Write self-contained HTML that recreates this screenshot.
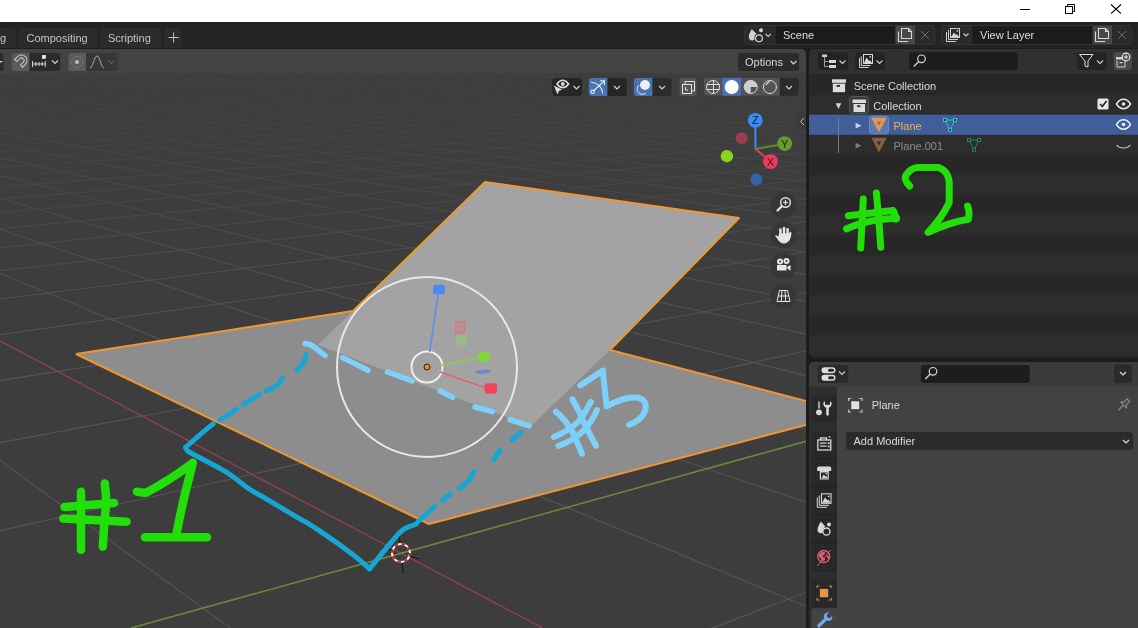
<!DOCTYPE html>
<html><head><meta charset="utf-8">
<style>
*{margin:0;padding:0;box-sizing:border-box}
html,body{width:1138px;height:628px;overflow:hidden;background:#1c1c1c;font-family:"Liberation Sans",sans-serif}
.a{position:absolute}
svg{display:block;will-change:transform}
#title{left:0;top:0;width:1138px;height:22px;background:#fff}
#topbar{left:0;top:22px;width:1138px;height:26px;background:#232323}
.tab{top:28px;height:20px;background:#2a2a2a;border-radius:4px 4px 0 0;color:#c2c2c2;font-size:12px;line-height:20px;text-align:center}
#vp{left:0;top:49px;width:806px;height:579px;background:#3d3d3d;overflow:hidden;border-radius:0 5px 0 0}
#outl{left:809px;top:49px;width:329px;height:308.6px;background:#272727;border-radius:5px 0 0 5px;overflow:hidden}
#props{left:809px;top:362px;width:329px;height:266px;background:#424242;border-radius:5px 0 0 0;overflow:hidden}
.txt{color:#d2d2d2;font-size:12px;white-space:nowrap;line-height:14px}
</style></head><body>
<div id="title" class="a">
  <svg class="a" style="left:0;top:0" width="1138" height="22">
    <line x1="1020" y1="9.5" x2="1030" y2="9.5" stroke="#000" stroke-width="1"/>
    <rect x="1065.5" y="6.5" width="7" height="7" fill="none" stroke="#000" stroke-width="1"/>
    <path d="M1067.5 6.5 V4.5 H1074.5 V11.5 H1072.5" fill="none" stroke="#000" stroke-width="1"/>
    <path d="M1111 4.5 L1121 13.7 M1121 4.5 L1111 13.7" stroke="#000" stroke-width="1.1"/>
  </svg>
</div>
<div id="topbar" class="a">
  <!-- scene selector -->
  <svg class="a" style="left:0;top:0" width="1138" height="26">
    <g>
      <rect x="744.5" y="3.5" width="190.5" height="19" rx="3" fill="#2a2a2a" stroke="#333" stroke-width="1"/>
      <rect x="776" y="4" width="119.5" height="18" fill="#1b1b1b"/>
      <rect x="895.5" y="4" width="19.5" height="18" fill="#484848"/>
      <!-- scene icon -->
      <path d="M751.8 7 C750.5 9.5 748.8 12 748.8 14.8 C748.8 17 750.2 18.5 752 18.5 C753 18.5 754 18 754.6 17.2 C754 14 755.5 12 756.5 11.8 C755.2 10.2 753 8.8 751.8 7Z" fill="#d2d2d2"/>
      <circle cx="761" cy="8.2" r="2" fill="#d2d2d2"/>
      <circle cx="759" cy="16.2" r="3.4" fill="none" stroke="#d2d2d2" stroke-width="1.2"/>
      <path d="M765.5 11.8 L768.2 14.5 L770.9 11.8" fill="none" stroke="#d2d2d2" stroke-width="1.1"/>
      <!-- copy -->
      <path d="M898.5 9.5 V19.5 H908 M901.5 6.5 H908.5 L911.5 9.5 V16.5 H901.5 Z M908.5 6.5 V9.5 H911.5" fill="none" stroke="#d8d8d8" stroke-width="1.1"/>
      <path d="M921 9 L929 17 M929 9 L921 17" stroke="#6a6a6a" stroke-width="1"/>
      <text x="783" y="17.2" font-family="Liberation Sans" font-size="11" fill="#dcdcdc">Scene</text>
    </g>
    <g>
      <rect x="941.5" y="3.5" width="190.5" height="19" rx="3" fill="#2a2a2a" stroke="#333" stroke-width="1"/>
      <rect x="972.3" y="4" width="120.4" height="18" fill="#1b1b1b"/>
      <rect x="1092.7" y="4" width="19.3" height="18" fill="#484848"/>
      <!-- view layer icon -->
      <path d="M946.5 10 V19.5 H956 M948.5 8 V17.5 H958" fill="none" stroke="#cfcfcf" stroke-width="1"/>
      <rect x="950.5" y="6.5" width="9" height="9" fill="none" stroke="#cfcfcf" stroke-width="1"/>
      <path d="M951 15 L954 10.5 L956 13 L957 12 L959 15 Z" fill="#cfcfcf"/>
      <circle cx="957.3" cy="8.8" r="0.9" fill="#cfcfcf"/>
      <path d="M963.5 11.5 L966 14 L968.5 11.5" fill="none" stroke="#cfcfcf" stroke-width="1.1"/>
      <path d="M1095.5 9.5 V19.5 H1105 M1098.5 6.5 H1105.5 L1108.5 9.5 V16.5 H1098.5 Z M1105.5 6.5 V9.5 H1108.5" fill="none" stroke="#d8d8d8" stroke-width="1.1"/>
      <path d="M1118 9 L1126 17 M1126 9 L1118 17" stroke="#6a6a6a" stroke-width="1"/>
      <text x="980" y="17.2" font-family="Liberation Sans" font-size="11" fill="#dcdcdc">View Layer</text>
    </g>
  </svg>
</div>
<svg class="a" style="left:0;top:0" width="1138" height="48" viewBox="0 0 1138 48">
  <path d="M-30 48 V31 A3 3 0 0 1 -27 28 H13.3 A3 3 0 0 1 16.3 31 V48Z" fill="#2b2b2b"/>
  <path d="M18 48 V31 A3 3 0 0 1 21 28 H94.5 A3 3 0 0 1 97.5 31 V48Z" fill="#2b2b2b"/>
  <path d="M100.2 48 V31 A3 3 0 0 1 103.2 28 H158.3 A3 3 0 0 1 161.3 31 V48Z" fill="#2b2b2b"/>
  <path d="M164.3 48 V31 A3 3 0 0 1 167.3 28 H179 A3 3 0 0 1 182 31 V48Z" fill="#2b2b2b"/>
  <g font-family="Liberation Sans" font-size="11" fill="#c4c4c4">
    <text x="0" y="42">g</text>
    <text x="26.5" y="42">Compositing</text>
    <text x="108" y="42">Scripting</text>
  </g>
  <path d="M173.6 32.5 V42.5 M168.6 37.5 H178.6" stroke="#c4c4c4" stroke-width="1"/>
</svg>
<div id="vp" class="a">
<svg width="806" height="579" viewBox="0 49 806 579" style="position:absolute;left:0;top:0">
<defs>
  <linearGradient id="gfade" x1="0" y1="48" x2="0" y2="628" gradientUnits="userSpaceOnUse">
    <stop offset="0" stop-color="#fff" stop-opacity="0"/>
    <stop offset="0.07" stop-color="#fff" stop-opacity="0.12"/>
    <stop offset="0.2" stop-color="#fff" stop-opacity="0.4"/>
    <stop offset="0.4" stop-color="#fff" stop-opacity="0.8"/>
    <stop offset="0.6" stop-color="#fff" stop-opacity="1"/>
    <stop offset="1" stop-color="#fff" stop-opacity="1"/>
  </linearGradient>
  <mask id="gmask" maskUnits="userSpaceOnUse" x="0" y="48" width="806" height="580">
    <rect x="0" y="48" width="806" height="580" fill="url(#gfade)"/>
  </mask>
</defs>
<g stroke="#555555" stroke-width="1.1" mask="url(#gmask)">
<line x1="2372.0" y1="-158.0" x2="-3616.2" y2="217.5" stroke-opacity="1.00"/>
<line x1="2372.5" y1="-162.6" x2="-3615.2" y2="222.1" stroke-opacity="1.00"/>
<line x1="2373.0" y1="-167.4" x2="-3614.1" y2="226.9" stroke-opacity="1.00"/>
<line x1="2373.4" y1="-172.6" x2="-3612.9" y2="232.1" stroke-opacity="1.00"/>
<line x1="2373.8" y1="-178.0" x2="-3611.8" y2="237.5" stroke-opacity="1.00"/>
<line x1="2374.2" y1="-183.8" x2="-3610.6" y2="243.3" stroke-opacity="1.00"/>
<line x1="2374.5" y1="-190.0" x2="-3609.4" y2="249.5" stroke-opacity="1.00"/>
<line x1="2374.8" y1="-196.6" x2="-3608.1" y2="256.1" stroke-opacity="1.00"/>
<line x1="2375.0" y1="-203.7" x2="-3606.8" y2="263.1" stroke-opacity="1.00"/>
<line x1="2375.2" y1="-211.3" x2="-3605.4" y2="270.7" stroke-opacity="1.00"/>
<line x1="2375.3" y1="-219.4" x2="-3604.0" y2="278.8" stroke-opacity="1.00"/>
<line x1="2375.3" y1="-228.2" x2="-3602.4" y2="287.6" stroke-opacity="1.00"/>
<line x1="2375.3" y1="-237.7" x2="-3600.8" y2="297.1" stroke-opacity="1.00"/>
<line x1="2375.1" y1="-248.0" x2="-3599.1" y2="307.3" stroke-opacity="1.00"/>
<line x1="2374.8" y1="-259.2" x2="-3597.3" y2="318.5" stroke-opacity="1.00"/>
<line x1="2374.4" y1="-271.5" x2="-3595.3" y2="330.8" stroke-opacity="1.00"/>
<line x1="2373.8" y1="-284.9" x2="-3593.1" y2="344.2" stroke-opacity="1.00"/>
<line x1="2373.0" y1="-299.7" x2="-3590.8" y2="359.0" stroke-opacity="1.00"/>
<line x1="2371.9" y1="-316.1" x2="-3588.1" y2="375.4" stroke-opacity="1.00"/>
<line x1="2370.5" y1="-334.3" x2="-3585.2" y2="393.6" stroke-opacity="1.00"/>
<line x1="2368.7" y1="-354.8" x2="-3581.8" y2="414.0" stroke-opacity="1.00"/>
<line x1="2366.4" y1="-377.8" x2="-3578.0" y2="437.0" stroke-opacity="1.00"/>
<line x1="2363.5" y1="-404.0" x2="-3573.5" y2="463.2" stroke-opacity="1.00"/>
<line x1="2359.7" y1="-433.9" x2="-3568.2" y2="493.1" stroke-opacity="1.00"/>
<line x1="2354.9" y1="-468.6" x2="-3561.8" y2="527.7" stroke-opacity="1.00"/>
<line x1="2348.5" y1="-509.0" x2="-3554.0" y2="568.2" stroke-opacity="1.00"/>
<line x1="2340.2" y1="-557.0" x2="-3544.0" y2="616.2" stroke-opacity="1.00"/>
<line x1="2328.9" y1="-614.6" x2="-3531.2" y2="673.7" stroke-opacity="1.00"/>
<line x1="2313.3" y1="-685.0" x2="-3514.1" y2="744.1" stroke-opacity="1.00"/>
<line x1="2291.1" y1="-772.8" x2="-3490.3" y2="832.0" stroke-opacity="1.00"/>
<line x1="2258.3" y1="-885.1" x2="-3456.0" y2="944.3" stroke-opacity="1.00"/>
<line x1="2207.5" y1="-1032.9" x2="-3403.7" y2="1092.0" stroke-opacity="1.00"/>
<line x1="2123.7" y1="-1233.9" x2="-3318.3" y2="1293.0" stroke-opacity="1.00"/>
<line x1="1974.2" y1="-1516.8" x2="-3167.3" y2="1575.9" stroke-opacity="1.00"/>
<line x1="1682.4" y1="-1922.4" x2="-2874.0" y2="1981.4" stroke-opacity="1.00"/>
<line x1="1070.8" y1="-2465.5" x2="-2260.8" y2="2524.5" stroke-opacity="1.00"/>
<line x1="-109.2" y1="-2931.0" x2="-1079.3" y2="2990.0" stroke-opacity="1.00"/>
<line x1="-1570.1" y1="-2807.1" x2="383.1" y2="2866.1" stroke-opacity="1.00"/>
<line x1="-2544.6" y1="-2248.7" x2="1359.2" y2="2307.7" stroke-opacity="1.00"/>
<line x1="-3017.4" y1="-1736.1" x2="1833.5" y2="1795.0" stroke-opacity="1.00"/>
<line x1="-3363.2" y1="-1115.7" x2="2182.4" y2="1174.7" stroke-opacity="1.00"/>
<line x1="-3431.0" y1="-933.1" x2="2251.7" y2="992.0" stroke-opacity="1.00"/>
<line x1="-3472.7" y1="-797.5" x2="2294.9" y2="856.4" stroke-opacity="1.00"/>
<line x1="-3499.7" y1="-693.5" x2="2323.5" y2="752.4" stroke-opacity="1.00"/>
<line x1="-3518.1" y1="-611.5" x2="2343.4" y2="670.4" stroke-opacity="1.00"/>
<line x1="-3531.0" y1="-545.4" x2="2357.8" y2="604.3" stroke-opacity="1.00"/>
<line x1="-3540.3" y1="-491.0" x2="2368.7" y2="549.9" stroke-opacity="1.00"/>
<line x1="-3547.2" y1="-445.5" x2="2377.1" y2="504.4" stroke-opacity="0.97"/>
<line x1="-3552.4" y1="-407.0" x2="2383.8" y2="465.8" stroke-opacity="0.94"/>
<line x1="-3556.3" y1="-373.9" x2="2389.2" y2="432.7" stroke-opacity="0.90"/>
<line x1="-3559.3" y1="-345.2" x2="2393.7" y2="404.0" stroke-opacity="0.87"/>
<line x1="-3561.6" y1="-320.0" x2="2397.6" y2="378.8" stroke-opacity="0.84"/>
<line x1="-3563.4" y1="-297.9" x2="2400.8" y2="356.7" stroke-opacity="0.81"/>
<line x1="-3564.7" y1="-278.1" x2="2403.7" y2="336.9" stroke-opacity="0.78"/>
<line x1="-3565.7" y1="-260.5" x2="2406.2" y2="319.3" stroke-opacity="0.76"/>
<line x1="-3566.4" y1="-244.6" x2="2408.5" y2="303.4" stroke-opacity="0.74"/>
<line x1="-3567.0" y1="-230.3" x2="2410.5" y2="289.0" stroke-opacity="0.71"/>
<line x1="-3567.3" y1="-217.2" x2="2412.4" y2="276.0" stroke-opacity="0.69"/>
<line x1="-3567.5" y1="-205.3" x2="2414.1" y2="264.0" stroke-opacity="0.67"/>
<line x1="-3567.6" y1="-194.4" x2="2415.7" y2="253.1" stroke-opacity="0.66"/>
<line x1="-3567.6" y1="-184.4" x2="2417.2" y2="243.1" stroke-opacity="0.64"/>
<line x1="-3567.5" y1="-175.1" x2="2418.6" y2="233.8" stroke-opacity="0.62"/>
<line x1="-3567.3" y1="-166.6" x2="2419.9" y2="225.2" stroke-opacity="0.61"/>
<line x1="-3567.0" y1="-158.6" x2="2421.2" y2="217.3" stroke-opacity="0.59"/>
<line x1="-3566.7" y1="-151.2" x2="2422.4" y2="209.8" stroke-opacity="0.58"/>
<line x1="-3566.4" y1="-144.3" x2="2423.6" y2="202.9" stroke-opacity="0.56"/>
<line x1="-3566.0" y1="-137.8" x2="2424.7" y2="196.4" stroke-opacity="0.55"/>
<line x1="-3565.6" y1="-131.8" x2="2425.8" y2="190.4" stroke-opacity="0.54"/>
<line x1="-3565.1" y1="-126.1" x2="2426.8" y2="184.7" stroke-opacity="0.53"/>
<line x1="-3564.6" y1="-120.8" x2="2427.9" y2="179.3" stroke-opacity="0.51"/>
<line x1="-3564.1" y1="-115.7" x2="2428.9" y2="174.3" stroke-opacity="0.50"/>
<line x1="-3563.6" y1="-111.0" x2="2429.8" y2="169.5" stroke-opacity="0.49"/>
<line x1="-3563.1" y1="-106.5" x2="2430.8" y2="165.0" stroke-opacity="0.48"/>
<line x1="-3562.5" y1="-102.2" x2="2431.7" y2="160.7" stroke-opacity="0.47"/>
<line x1="-3561.9" y1="-98.2" x2="2432.7" y2="156.7" stroke-opacity="0.47"/>
<line x1="-3561.3" y1="-94.3" x2="2433.6" y2="152.8" stroke-opacity="0.46"/>
<line x1="-3560.7" y1="-90.7" x2="2434.5" y2="149.2" stroke-opacity="0.45"/>
<line x1="-3560.1" y1="-87.2" x2="2435.4" y2="145.7" stroke-opacity="0.44"/>
<line x1="-3559.5" y1="-83.9" x2="2436.2" y2="142.3" stroke-opacity="0.43"/>
<line x1="-3558.9" y1="-80.7" x2="2437.1" y2="139.2" stroke-opacity="0.42"/>
<line x1="-3558.2" y1="-77.7" x2="2438.0" y2="136.1" stroke-opacity="0.42"/>
<line x1="-3557.6" y1="-74.8" x2="2438.8" y2="133.2" stroke-opacity="0.41"/>
<line x1="-3556.9" y1="-72.1" x2="2439.7" y2="130.5" stroke-opacity="0.40"/>
<line x1="-3556.3" y1="-69.4" x2="2440.5" y2="127.8" stroke-opacity="0.40"/>
<line x1="-3555.6" y1="-66.9" x2="2441.3" y2="125.3" stroke-opacity="0.39"/>
<line x1="-3554.9" y1="-64.5" x2="2442.2" y2="122.8" stroke-opacity="0.38"/>
<line x1="-3554.2" y1="-62.1" x2="2443.0" y2="120.5" stroke-opacity="0.38"/>
<line x1="-3553.6" y1="-59.9" x2="2443.8" y2="118.2" stroke-opacity="0.37"/>
<line x1="-3552.9" y1="-57.7" x2="2444.6" y2="116.0" stroke-opacity="0.37"/>
<line x1="-3552.2" y1="-55.6" x2="2445.4" y2="113.9" stroke-opacity="0.36"/>
<line x1="-3551.5" y1="-53.6" x2="2446.2" y2="111.9" stroke-opacity="0.36"/>
<line x1="-3550.8" y1="-51.7" x2="2447.0" y2="110.0" stroke-opacity="0.35"/>
<line x1="-3550.1" y1="-49.8" x2="2447.8" y2="108.1" stroke-opacity="0.35"/>
<line x1="-3549.4" y1="-48.0" x2="2448.6" y2="106.3" stroke-opacity="0.34"/>
<line x1="-3548.7" y1="-46.3" x2="2449.4" y2="104.5" stroke-opacity="0.34"/>
<line x1="-3548.0" y1="-44.6" x2="2450.2" y2="102.8" stroke-opacity="0.33"/>
<line x1="-3547.3" y1="-43.0" x2="2450.9" y2="101.2" stroke-opacity="0.33"/>
<line x1="-3546.6" y1="-41.4" x2="2451.7" y2="99.6" stroke-opacity="0.32"/>
<line x1="-3545.9" y1="-39.9" x2="2452.5" y2="98.1" stroke-opacity="0.32"/>
<line x1="5213.6" y1="-55.9" x2="-785.2" y2="68.1" stroke-opacity="0.14"/>
<line x1="5215.3" y1="-56.3" x2="-783.4" y2="68.5" stroke-opacity="0.14"/>
<line x1="5217.0" y1="-56.8" x2="-781.7" y2="69.0" stroke-opacity="0.15"/>
<line x1="5218.7" y1="-57.3" x2="-780.0" y2="69.4" stroke-opacity="0.15"/>
<line x1="5220.4" y1="-57.8" x2="-778.3" y2="69.9" stroke-opacity="0.15"/>
<line x1="5222.1" y1="-58.3" x2="-776.5" y2="70.4" stroke-opacity="0.15"/>
<line x1="5223.8" y1="-58.8" x2="-774.8" y2="70.9" stroke-opacity="0.15"/>
<line x1="5225.5" y1="-59.3" x2="-773.1" y2="71.4" stroke-opacity="0.16"/>
<line x1="5227.2" y1="-59.9" x2="-771.3" y2="71.9" stroke-opacity="0.16"/>
<line x1="5228.9" y1="-60.4" x2="-769.6" y2="72.4" stroke-opacity="0.16"/>
<line x1="5230.6" y1="-61.0" x2="-767.9" y2="72.9" stroke-opacity="0.16"/>
<line x1="5232.4" y1="-61.6" x2="-766.1" y2="73.5" stroke-opacity="0.16"/>
<line x1="5234.1" y1="-62.2" x2="-764.4" y2="74.1" stroke-opacity="0.17"/>
<line x1="5235.8" y1="-62.8" x2="-762.6" y2="74.7" stroke-opacity="0.17"/>
<line x1="5237.5" y1="-63.4" x2="-760.9" y2="75.3" stroke-opacity="0.17"/>
<line x1="5239.3" y1="-64.1" x2="-759.1" y2="75.9" stroke-opacity="0.17"/>
<line x1="5241.0" y1="-64.7" x2="-757.4" y2="76.5" stroke-opacity="0.18"/>
<line x1="5242.7" y1="-65.4" x2="-755.6" y2="77.2" stroke-opacity="0.18"/>
<line x1="5244.4" y1="-66.1" x2="-753.8" y2="77.9" stroke-opacity="0.18"/>
<line x1="5246.2" y1="-66.9" x2="-752.1" y2="78.6" stroke-opacity="0.18"/>
<line x1="5247.9" y1="-67.6" x2="-750.3" y2="79.3" stroke-opacity="0.19"/>
<line x1="5249.6" y1="-68.4" x2="-748.5" y2="80.1" stroke-opacity="0.19"/>
<line x1="5251.4" y1="-69.2" x2="-746.8" y2="80.9" stroke-opacity="0.19"/>
<line x1="5253.1" y1="-70.1" x2="-745.0" y2="81.7" stroke-opacity="0.19"/>
<line x1="5254.8" y1="-70.9" x2="-743.2" y2="82.5" stroke-opacity="0.20"/>
<line x1="5256.6" y1="-71.8" x2="-741.4" y2="83.4" stroke-opacity="0.20"/>
<line x1="5258.3" y1="-72.7" x2="-739.6" y2="84.2" stroke-opacity="0.20"/>
<line x1="5260.1" y1="-73.7" x2="-737.8" y2="85.2" stroke-opacity="0.21"/>
<line x1="5261.8" y1="-74.6" x2="-736.1" y2="86.1" stroke-opacity="0.21"/>
<line x1="5263.5" y1="-75.7" x2="-734.3" y2="87.1" stroke-opacity="0.21"/>
<line x1="5265.3" y1="-76.7" x2="-732.5" y2="88.1" stroke-opacity="0.22"/>
<line x1="5267.0" y1="-77.8" x2="-730.7" y2="89.2" stroke-opacity="0.22"/>
<line x1="5268.8" y1="-79.0" x2="-728.8" y2="90.3" stroke-opacity="0.23"/>
<line x1="5270.5" y1="-80.1" x2="-727.0" y2="91.5" stroke-opacity="0.23"/>
<line x1="5272.3" y1="-81.4" x2="-725.2" y2="92.7" stroke-opacity="0.23"/>
<line x1="5274.0" y1="-82.6" x2="-723.4" y2="93.9" stroke-opacity="0.24"/>
<line x1="5275.7" y1="-84.0" x2="-721.6" y2="95.2" stroke-opacity="0.24"/>
<line x1="5277.5" y1="-85.4" x2="-719.7" y2="96.6" stroke-opacity="0.25"/>
<line x1="5279.2" y1="-86.8" x2="-717.9" y2="98.0" stroke-opacity="0.25"/>
<line x1="5281.0" y1="-88.3" x2="-716.1" y2="99.5" stroke-opacity="0.26"/>
<line x1="5282.7" y1="-89.9" x2="-714.2" y2="101.0" stroke-opacity="0.26"/>
<line x1="5284.5" y1="-91.5" x2="-712.4" y2="102.7" stroke-opacity="0.27"/>
<line x1="5286.2" y1="-93.3" x2="-710.5" y2="104.4" stroke-opacity="0.28"/>
<line x1="5288.0" y1="-95.1" x2="-708.7" y2="106.1" stroke-opacity="0.28"/>
<line x1="5289.7" y1="-97.0" x2="-706.8" y2="108.0" stroke-opacity="0.29"/>
<line x1="5291.4" y1="-99.0" x2="-704.9" y2="110.0" stroke-opacity="0.30"/>
<line x1="5293.2" y1="-101.1" x2="-703.1" y2="112.1" stroke-opacity="0.30"/>
<line x1="5294.9" y1="-103.3" x2="-701.2" y2="114.3" stroke-opacity="0.31"/>
<line x1="5296.6" y1="-105.7" x2="-699.3" y2="116.6" stroke-opacity="0.32"/>
<line x1="5298.3" y1="-108.1" x2="-697.4" y2="119.0" stroke-opacity="0.33"/>
<line x1="5300.1" y1="-110.8" x2="-695.4" y2="121.6" stroke-opacity="0.34"/>
<line x1="5301.8" y1="-113.6" x2="-693.5" y2="124.4" stroke-opacity="0.34"/>
<line x1="5303.5" y1="-116.5" x2="-691.6" y2="127.3" stroke-opacity="0.35"/>
<line x1="5305.2" y1="-119.7" x2="-689.6" y2="130.4" stroke-opacity="0.36"/>
<line x1="5306.8" y1="-123.0" x2="-687.7" y2="133.8" stroke-opacity="0.38"/>
<line x1="5308.5" y1="-126.6" x2="-685.7" y2="137.3" stroke-opacity="0.39"/>
<line x1="5310.2" y1="-130.5" x2="-683.7" y2="141.1" stroke-opacity="0.40"/>
<line x1="5311.8" y1="-134.6" x2="-681.7" y2="145.2" stroke-opacity="0.41"/>
<line x1="5313.4" y1="-139.0" x2="-679.6" y2="149.7" stroke-opacity="0.43"/>
<line x1="5315.0" y1="-143.8" x2="-677.5" y2="154.4" stroke-opacity="0.44"/>
<line x1="5316.6" y1="-149.1" x2="-675.4" y2="159.6" stroke-opacity="0.46"/>
<line x1="5318.2" y1="-154.7" x2="-673.3" y2="165.3" stroke-opacity="0.48"/>
<line x1="5319.7" y1="-160.9" x2="-671.1" y2="171.4" stroke-opacity="0.50"/>
<line x1="5321.1" y1="-167.7" x2="-668.9" y2="178.2" stroke-opacity="0.52"/>
<line x1="5322.5" y1="-175.1" x2="-666.6" y2="185.6" stroke-opacity="0.54"/>
<line x1="5323.9" y1="-183.4" x2="-664.2" y2="193.8" stroke-opacity="0.56"/>
<line x1="5325.2" y1="-192.5" x2="-661.8" y2="202.9" stroke-opacity="0.59"/>
<line x1="5326.3" y1="-202.8" x2="-659.3" y2="213.2" stroke-opacity="0.62"/>
<line x1="5327.3" y1="-214.3" x2="-656.6" y2="224.7" stroke-opacity="0.65"/>
<line x1="5328.2" y1="-227.4" x2="-653.7" y2="237.7" stroke-opacity="0.69"/>
<line x1="5328.9" y1="-242.4" x2="-650.7" y2="252.7" stroke-opacity="0.72"/>
<line x1="5329.3" y1="-259.7" x2="-647.3" y2="269.9" stroke-opacity="0.77"/>
<line x1="5329.3" y1="-279.9" x2="-643.6" y2="290.1" stroke-opacity="0.82"/>
<line x1="5328.8" y1="-303.8" x2="-639.3" y2="314.0" stroke-opacity="0.88"/>
<line x1="5327.5" y1="-332.5" x2="-634.4" y2="342.6" stroke-opacity="0.94"/>
<line x1="5325.2" y1="-367.6" x2="-628.3" y2="377.7" stroke-opacity="1.00"/>
<line x1="5321.3" y1="-411.5" x2="-620.6" y2="421.6" stroke-opacity="1.00"/>
<line x1="5314.7" y1="-468.0" x2="-610.3" y2="478.1" stroke-opacity="1.00"/>
<line x1="5303.6" y1="-543.2" x2="-595.4" y2="553.3" stroke-opacity="1.00"/>
<line x1="5284.0" y1="-648.2" x2="-572.0" y2="658.2" stroke-opacity="1.00"/>
<line x1="5165.9" y1="-1056.1" x2="-446.3" y2="1066.0" stroke-opacity="1.00"/>
<line x1="4948.8" y1="-1513.9" x2="-225.5" y2="1523.8" stroke-opacity="1.00"/>
<line x1="4158.3" y1="-2399.0" x2="568.8" y2="2408.9" stroke-opacity="1.00"/>
<line x1="1704.1" y1="-2921.3" x2="3026.8" y2="2931.1" stroke-opacity="1.00"/>
<line x1="51.1" y1="-1901.7" x2="4683.5" y2="1911.6" stroke-opacity="1.00"/>
</g>
  <line x1="0" y1="341" x2="542.5" y2="628" stroke="#8a4150" stroke-width="1.5"/>
  <line x1="131" y1="628" x2="806" y2="441.3" stroke="#6a8a36" stroke-width="1.6"/>
  <!-- planes -->
  <polygon points="76,354 353,311 610,350 806,401 806,425 429,524" fill="#8d8d8d"/>
  <polygon points="485,182 739,218 610,350 531,426 318,345 353,311" fill="#a3a3a3"/>
  <polyline points="76,354 353,311 485,182 739,218 610,350 806,401" fill="none" stroke="#f0962e" stroke-width="2" stroke-linejoin="round"/>
  <polyline points="806,425 429,524 76,354" fill="none" stroke="#f0962e" stroke-width="2" stroke-linejoin="round"/>
  <!-- 3d cursor -->
  <g transform="translate(401,553)">
    <circle r="9" fill="none" stroke="#fff" stroke-width="2"/>
    <circle r="9" fill="none" stroke="#c82020" stroke-width="2" stroke-dasharray="3.5 3.6"/>
    <path d="M-2 -20 L-1 -10 M1 10 L2 20 M-18 -6 L-9 -3 M9 3 L18 6" stroke="#111" stroke-width="1"/>
  </g>

  <!-- ===== viewport header ===== -->
  <rect x="0" y="49" width="806" height="24" fill="#434343"/>
  <!-- left partial button -->
  <rect x="-10" y="53" width="13.5" height="18" rx="3" fill="#2b2b2b"/>
  <path d="M-1 61 L1 63 L3 61" fill="#cfcfcf"/>
  <!-- snap -->
  <rect x="11.4" y="53" width="49" height="18" rx="3" fill="#2b2b2b"/>
  <path d="M14.4 53 H29.5 V71 H14.4 A3 3 0 0 1 11.4 68 V56 A3 3 0 0 1 14.4 53Z" fill="#5b5b5b"/>
  <g transform="translate(21.5 60.5) rotate(45)"><path d="M-5.5 4 V0 A5.5 5.5 0 0 1 5.5 0 V4 H2.5 V0 A2.5 2.5 0 0 0 -2.5 0 V4 Z" fill="none" stroke="#cacaca" stroke-width="1"/></g>
  <path d="M32.5 67 V61 M32.5 64 H45 M35.8 62 V66 M39 62 V66 M42.3 62 V66 M45.3 61 V67" stroke="#d4d4d4" stroke-width="1"/>
  <rect x="42" y="55" width="3.8" height="3.8" fill="#e4e4e4"/>
  <path d="M52 60.5 L55 63.5 L58 60.5" fill="none" stroke="#d0d0d0" stroke-width="1.2"/>
  <!-- proportional -->
  <rect x="68.3" y="53" width="49.4" height="18" rx="3" fill="#373737"/>
  <path d="M71.3 53 H86 V71 H71.3 A3 3 0 0 1 68.3 68 V56 A3 3 0 0 1 71.3 53Z" fill="#5b5b5b"/>
  <circle cx="77" cy="62" r="5.5" fill="none" stroke="#727272" stroke-width="1"/>
  <circle cx="77" cy="62" r="2" fill="#bdbdbd"/>
  <path d="M90 68 C93 68 94 56 97 56 C100 56 101 68 104 68" fill="none" stroke="#a8a8a8" stroke-width="1"/>
  <path d="M108.5 60.5 L111.5 63.5 L114.5 60.5" fill="none" stroke="#5a5a5a" stroke-width="1.2"/>
  <!-- options -->
  <rect x="738" y="53" width="61" height="18" rx="3" fill="#2b2b2b"/>
  <text x="745" y="66" font-family="Liberation Sans" font-size="11" fill="#d5d5d5">Options</text>
  <path d="M790.5 61 L793.5 64 L796.5 61" fill="none" stroke="#d6d6d6" stroke-width="1.2"/>
  <!-- eye -->
  <rect x="552.3" y="78" width="29.7" height="18" rx="3" fill="#262626"/>
  <path d="M557 84 C559 81.2 561 80.2 562.8 80.2 C564.6 80.2 566.6 81.2 568.6 84 C566.6 86.8 564.6 87.6 562.8 87.6 C561 87.6 559 86.8 557 84Z" fill="none" stroke="#dcdcdc" stroke-width="1.5"/>
  <circle cx="562.8" cy="83.9" r="1.9" fill="#dcdcdc"/>
  <path d="M553.8 85.6 L562.3 89.8 L559 90.8 L557.6 94.4Z" fill="#dcdcdc"/>
  <path d="M573.5 86 L576.5 89 L579.5 86" fill="none" stroke="#d6d6d6" stroke-width="1.2"/>
  <!-- gizmo toggle -->
  <rect x="588.7" y="78" width="38.1" height="18" rx="3" fill="#262626"/>
  <path d="M591.7 78 H607.4 V96 H591.7 A3 3 0 0 1 588.7 93 V81 A3 3 0 0 1 591.7 78Z" fill="#4772b3"/>
  <path d="M591.1 82.3 C597 82.5 602.5 87 602.7 93.6" fill="none" stroke="#eeeeee" stroke-width="1.1"/>
  <circle cx="592.6" cy="91.8" r="1.7" fill="none" stroke="#eeeeee" stroke-width="1.1"/>
  <path d="M593.9 90.5 L604.3 80.9 M600.2 80.8 H604.4 V85" fill="none" stroke="#eeeeee" stroke-width="1.1"/>
  <path d="M614 86 L617 89 L620 86" fill="none" stroke="#d6d6d6" stroke-width="1.2"/>
  <!-- overlays -->
  <rect x="633.7" y="78" width="37.8" height="18" rx="3" fill="#2b2b2b"/>
  <path d="M636.7 78 H652.4 V96 H636.7 A3 3 0 0 1 633.7 93 V81 A3 3 0 0 1 636.7 78Z" fill="#4772b3"/>
  <circle cx="645" cy="85" r="5" fill="#eeeeee"/>
  <path d="M639 85 A5.3 5.3 0 1 0 646 93" fill="none" stroke="#e8e8e8" stroke-width="1"/>
  <path d="M659 86 L662 89 L665 86" fill="none" stroke="#d0d0d0" stroke-width="1.2"/>
  <!-- xray -->
  <rect x="679.6" y="78" width="17" height="18" rx="3" fill="#545454"/>
  <rect x="682.5" y="84.5" width="9" height="9" fill="none" stroke="#e0e0e0" stroke-width="1"/>
  <path d="M685 84.5 V81.5 H694.5 V91 H691.5" fill="none" stroke="#e0e0e0" stroke-width="1"/>
  <path d="M685.5 87 V90 H688" fill="none" stroke="#e0e0e0" stroke-width="1"/>
  <!-- shading -->
  <rect x="703.9" y="77.8" width="94.7" height="18" rx="3" fill="#2b2b2b"/>
  <path d="M706.9 77.8 H722.2 V95.8 H706.9 A3 3 0 0 1 703.9 92.8 V80.8 A3 3 0 0 1 706.9 77.8Z" fill="#545454"/>
  <rect x="722.2" y="77.8" width="19" height="18" fill="#4772b3"/>
  <rect x="741.2" y="77.8" width="19" height="18" fill="#545454"/>
  <rect x="760.2" y="77.8" width="19.4" height="18" fill="#545454"/>
  <circle cx="713" cy="87" r="6.5" fill="none" stroke="#dcdcdc" stroke-width="1"/>
  <path d="M706.5 84.5 H719.5 M706.5 89.5 H719.5 M713.5 80.5 V93.5" stroke="#dcdcdc" stroke-width="1"/>
  <circle cx="731.7" cy="87" r="7" fill="#ffffff"/>
  <circle cx="750.7" cy="87" r="6.5" fill="none" stroke="#dcdcdc" stroke-width="1"/>
  <path d="M750.7 80.5 A6.5 6.5 0 0 0 750.7 93.5 V87 H757.2 A6.5 6.5 0 0 0 750.7 80.5Z" fill="#cfcfcf"/>
  <circle cx="769.9" cy="87" r="6.5" fill="none" stroke="#dcdcdc" stroke-width="1"/>
  <path d="M766 85 C767 83 768.5 82 770 81.5" fill="none" stroke="#dcdcdc" stroke-width="1.3"/>
  <path d="M786 86 L789 89 L792 86" fill="none" stroke="#d0d0d0" stroke-width="1.2"/>
  <!-- sidebar toggle -->
  <rect x="797" y="112" width="12" height="18" rx="3" fill="#3a3a3a"/>
  <path d="M804 118 L800.5 121.5 L804 125" fill="none" stroke="#bdbdbd" stroke-width="1"/>
  <!-- nav gizmo -->
  <line x1="755.6" y1="149" x2="755.3" y2="127" stroke="#3d8df0" stroke-width="2"/>
  <line x1="755.6" y1="149" x2="778" y2="145" stroke="#5f8a2a" stroke-width="2"/>
  <line x1="755.6" y1="149" x2="765" y2="157" stroke="#e04058" stroke-width="2"/>
  <circle cx="741.7" cy="138.2" r="6" fill="#9c3c4e"/>
  <circle cx="726.9" cy="156.2" r="6.2" fill="#86d41c"/>
  <circle cx="756.3" cy="179.4" r="6" fill="#3066a8"/>
  <circle cx="755.3" cy="120.3" r="7.4" fill="#3a8cf2"/>
  <circle cx="784.7" cy="143.6" r="7.4" fill="#6a9a2c"/>
  <circle cx="770.5" cy="161.6" r="7.4" fill="#ef3a5c"/>
  <text x="755.3" y="124.3" font-family="Liberation Sans" font-size="11" fill="#0c1a40" text-anchor="middle">Z</text>
  <text x="784.7" y="147.6" font-family="Liberation Sans" font-size="11" fill="#1a2a08" text-anchor="middle">Y</text>
  <text x="770.5" y="165.6" font-family="Liberation Sans" font-size="11" fill="#4a0a14" text-anchor="middle">X</text>
  <!-- nav buttons -->
  <g fill="#353535" fill-opacity="0.85">
    <circle cx="783.5" cy="205" r="13"/>
    <circle cx="783.5" cy="235" r="13"/>
    <circle cx="783.5" cy="265.5" r="13"/>
    <circle cx="783.5" cy="296" r="13"/>
  </g>
  <g fill="none" stroke="#e6e6e6">
    <circle cx="785.5" cy="202.5" r="4.8" stroke-width="1.4"/>
    <path d="M785.5 200 V205 M783 202.5 H788" stroke-width="1.2"/>
    <path d="M781.8 206.2 L777.5 210.5" stroke-width="2.2" stroke-linecap="round"/>
  </g>
  <g fill="#e6e6e6" stroke="#e6e6e6" stroke-linecap="round">
    <path d="M780.4 236 V229.5" stroke-width="2.5"/>
    <path d="M784 235 V228" stroke-width="2.5"/>
    <path d="M787.6 235 V229.3" stroke-width="2.5"/>
    <path d="M789.8 236.5 L790.4 233" stroke-width="2.2"/>
    <path d="M776 235.8 L779.2 237.3 L779.3 234 H790.6 L790 238 C789 241.5 786.5 243 783.8 243 C781 243 779.5 241.5 777.5 238.5 Z" stroke-width="1" stroke-linejoin="round"/>
  </g>
  <g fill="#e6e6e6">
    <circle cx="780" cy="261.5" r="3"/><circle cx="786.5" cy="261" r="3"/>
    <rect x="777" y="265" width="9.5" height="5.5"/>
    <path d="M786.5 267.5 L790.5 265 V271 Z"/>
  </g>
  <circle cx="780" cy="261.5" r="1" fill="#353535"/><circle cx="786.5" cy="261" r="1" fill="#353535"/>
  <g fill="none" stroke="#e6e6e6" stroke-width="1">
    <path d="M779.5 290.5 H787.5 L790 301.5 H777 Z"/>
    <path d="M778.3 296 H788.7 M782 290.5 L781.3 301.5 M785 290.5 L785.7 301.5"/>
  </g>

  <!-- transform gizmo -->
  <g>
    <circle cx="427" cy="367" r="90" fill="none" stroke="#e8e8e8" stroke-width="2"/>
    <circle cx="427" cy="367" r="15.5" fill="none" stroke="#eeeeee" stroke-width="2"/>
    <circle cx="427" cy="367" r="3" fill="#f08a20" stroke="#222" stroke-width="1"/>
    <line x1="429.7" y1="352" x2="438.5" y2="292" stroke="#5a8ff0" stroke-width="1.7"/>
    <rect x="433" y="284.8" width="11.8" height="9.5" rx="2.5" fill="#4b8af2"/>
    <line x1="440" y1="365.5" x2="480" y2="357.5" stroke="#8ad050" stroke-width="1.7"/>
    <rect x="477.8" y="352.2" width="12" height="9.6" rx="3" fill="#80d83c"/>
    <line x1="440" y1="372" x2="486" y2="388" stroke="#ee5c6e" stroke-width="1.7"/>
    <rect x="484.5" y="383.2" width="12.5" height="10.5" rx="3" fill="#f0445e"/>
    <path d="M456 322 L465.4 321 L464.4 332.5 L455 333.5 Z" fill="#e07080" fill-opacity="0.45" stroke="#e86878" stroke-opacity="0.8" stroke-width="1"/>
    <path d="M456 336 L466.3 334.5 L467.3 345.9 L457 346.9 Z" fill="#90d070" fill-opacity="0.55"/>
    <ellipse cx="483" cy="371.7" rx="8" ry="2" fill="#5b80e0" fill-opacity="0.8" transform="rotate(-4 483 371.7)"/>
  </g>

  <!-- ===== annotations ===== -->
  <g fill="none" stroke-linecap="round" stroke-linejoin="round">
    <!-- dark blue solid -->
    <path stroke="#16a6d3" stroke-width="5" d="M213.2 423.8 C210.9 425.7 203.8 431.4 199.2 435.3 C194.6 439.2 187.8 445.5 185.5 447.5 C186.1 448.2 185.7 449.7 189.0 451.9 C192.3 454.1 199.0 457.2 205.6 460.8 C212.2 464.4 221.3 468.8 228.5 473.5 C235.7 478.2 243.0 484.8 248.9 488.8 C254.8 492.8 257.0 493.4 264.2 497.7 C271.4 501.9 283.3 509.0 292.2 514.3 C301.1 519.6 307.5 522.8 317.7 529.6 C327.9 536.4 344.8 548.4 353.4 555.0 C362.0 561.6 366.9 566.7 369.6 569.0 C373.1 564.7 385.0 549.5 390.6 543.0 C396.2 536.5 398.7 532.9 403.0 529.7 C407.3 526.5 414.2 525.0 416.4 524.0"/>
    <!-- dark blue dashes left -->
    <g stroke="#16a6d3" stroke-width="5">
      <path d="M306 354.5 Q305 364 297 370"/>
      <path d="M282.5 378 Q280 386 265.8 391"/>
      <path d="M259 394.6 L243.5 404.6"/>
      <path d="M236.9 409 L220 420"/>
      <!-- right -->
      <path d="M521 432.3 L512 440"/>
      <path d="M500 450.5 L493.8 459.5"/>
      <path d="M474 471.7 Q470 482 459 488.3"/>
      <path d="M450 494 L442.4 500.4"/>
      <path d="M434.8 506.5 L418 521.6"/>
    </g>
    <!-- light blue dashes along fold -->
    <g stroke="#7dd0fa" stroke-width="5.5">
      <path d="M305 343.5 Q311 344 314 347 L325 355.6"/>
      <path d="M342.7 357.6 L368 370.3"/>
      <path d="M387.5 372 L412 381"/>
      <path d="M440 391 L452.6 397.4"/>
      <path d="M475 407 L492.4 411.7"/>
      <path d="M510 419.7 L529 426"/>
    </g>
    <!-- #3 -->
    <g stroke="#7dd0fa" stroke-width="6">
      <path d="M555.8 411.7 Q566 420 573 433 L582 453.7"/>
      <path d="M572.4 399.4 Q580 412 585 425 L596 445.8"/>
      <path d="M554 437 Q570 430 578 422 Q586 412 590.8 402"/>
      <path d="M558.5 446 Q575 440 584 430 Q593 420 597 410"/>
      <path d="M580.3 385.4 L603 370.5 Q604 385 606.6 406.4 Q625 396 638 397.7 Q648 400 645 411 Q642 420 629 424.8"/>
    </g>
    <!-- #1 green -->
    <g stroke="#22df0a" stroke-width="8.5">
      <path d="M81 491.7 V549.7"/>
      <path d="M104.8 483.5 Q106.5 496 105.9 506 Q104 525 102.8 546.6"/>
      <path d="M64.5 507 L114 503"/>
      <path d="M63.4 518.6 L126.6 521.7"/>
      <path d="M136.9 491.7 Q140 493 146 492.8 Q170 480 192.8 462.8 Q189 478 184.5 495.9 Q180 515 176.2 535.2"/>
      <path d="M145 537.2 H207"/>
    </g>
    <!-- #2 green (drawn here, but in outliner coordinates) -->
  </g>
</svg>
</div>
<div id="outl" class="a">
<svg width="329" height="309" viewBox="809 49 329 309" style="position:absolute;left:0;top:0">
  <rect x="809" y="49" width="329" height="25" fill="#303030"/>
  <g fill="#2d2d2d">
    <rect x="809" y="95" width="329" height="20"/>
    <rect x="809" y="135" width="329" height="20"/>
    <rect x="809" y="175" width="329" height="20"/>
    <rect x="809" y="215" width="329" height="20"/>
    <rect x="809" y="255" width="329" height="20"/>
    <rect x="809" y="295" width="329" height="20"/>
    <rect x="809" y="335" width="329" height="20"/>
  </g>
  <rect x="809" y="114.7" width="329" height="20.1" fill="#405e98"/>
  <!-- header buttons -->
  <rect x="817.9" y="52.3" width="30" height="17.7" rx="3" fill="#232323"/>
  <rect x="822" y="54.5" width="5" height="2.5" fill="#d0d0d0"/>
  <path d="M824.5 57 V66.5 H828.5 M824.5 61.5 H828.5" fill="none" stroke="#a0a0a0" stroke-width="1"/>
  <rect x="829" y="60" width="7" height="3" fill="#d6d6d6"/>
  <rect x="829" y="65" width="7" height="3" fill="#d6d6d6"/>
  <path d="M839.5 60.5 L842.5 63.5 L845.5 60.5" fill="none" stroke="#d0d0d0" stroke-width="1.1"/>
  <rect x="855.2" y="52.3" width="29.7" height="17.7" rx="3" fill="#232323"/>
  <path d="M859.5 58 V67.5 H868.5 M861.3 56.3 V65.5 H870.5" fill="none" stroke="#cfcfcf" stroke-width="1"/>
  <rect x="863.5" y="54.5" width="9" height="9" fill="none" stroke="#d8d8d8" stroke-width="1"/>
  <path d="M864 63 L866.5 57.5 L869 61 L870 60 L872 63 Z" fill="#d8d8d8"/>
  <circle cx="870.3" cy="56.8" r="0.9" fill="#d8d8d8"/>
  <path d="M876.5 60.5 L879.5 63.5 L882.5 60.5" fill="none" stroke="#d0d0d0" stroke-width="1.1"/>
  <rect x="909" y="52.3" width="109" height="17.7" rx="3" fill="#1d1d1d"/>
  <circle cx="921.5" cy="58.8" r="3.8" fill="none" stroke="#d8d8d8" stroke-width="1.2"/>
  <path d="M918.8 61.5 L913.8 66.5" stroke="#d8d8d8" stroke-width="1.2"/>
  <rect x="1076.8" y="52.3" width="29.8" height="17.7" rx="3" fill="#232323"/>
  <path d="M1079.5 54.5 H1093 L1088 61 V67 L1085 66 V61 Z" fill="none" stroke="#dadada" stroke-width="1" stroke-linejoin="round"/>
  <path d="M1097 60.5 L1100 63.5 L1103 60.5" fill="none" stroke="#d0d0d0" stroke-width="1.1"/>
  <rect x="1113.7" y="52.3" width="18.2" height="17.7" rx="3" fill="#4a4a4a"/>
  <rect x="1116" y="57" width="9" height="2.5" fill="#d0d0d0"/>
  <path d="M1117 60.5 V67 H1125 V60.5" fill="none" stroke="#d0d0d0" stroke-width="1"/>
  <rect x="1119.5" y="62" width="3" height="1.2" fill="#d0d0d0"/>
  <circle cx="1126" cy="57" r="3.8" fill="#4a4a4a" stroke="#e8e8e8" stroke-width="1.2"/>
  <path d="M1126 54.8 V59.2 M1123.8 57 H1128.2" stroke="#e8e8e8" stroke-width="1"/>
  <!-- row 1 scene collection -->
  <rect x="832" y="79.3" width="14" height="3.5" fill="#dcdcdc"/>
  <rect x="832.8" y="83.6" width="12.3" height="8.6" fill="#dcdcdc"/>
  <rect x="836.5" y="85" width="3.5" height="1.8" fill="#282828"/>
  <text x="853.7" y="90" font-family="Liberation Sans" font-size="11" fill="#dadada">Scene Collection</text>
  <!-- row 2 collection -->
  <path d="M835.6 103.2 H841.3 L838.45 108.9 Z" fill="#d0d0d0"/>
  <rect x="849.5" y="96.5" width="19" height="16.8" rx="3" fill="#3a3a3a" stroke="#5a5a5a" stroke-width="1"/>
  <rect x="852.5" y="99.5" width="13.5" height="3.5" fill="#dcdcdc"/>
  <rect x="853.5" y="104" width="11.5" height="8" fill="#dcdcdc"/>
  <rect x="857" y="105.3" width="3.5" height="1.8" fill="#3a3a3a"/>
  <text x="873.3" y="110" font-family="Liberation Sans" font-size="11" fill="#dadada">Collection</text>
  <rect x="1097.5" y="98.5" width="11" height="11" rx="1.5" fill="#e8e8e8"/>
  <path d="M1100 104 L1102.3 106.5 L1106.5 101" fill="none" stroke="#222" stroke-width="1.6"/>
  <path d="M1116.5 104 C1119 100 1121.5 99.3 1123.5 99.3 C1125.5 99.3 1128 100 1130.5 104 C1128 108 1125.5 108.7 1123.5 108.7 C1121.5 108.7 1119 108 1116.5 104Z" fill="none" stroke="#e8e8e8" stroke-width="1.5"/>
  <circle cx="1123.5" cy="104" r="1.8" fill="#e8e8e8"/>
  <!-- row 3 plane selected -->
  <line x1="838.5" y1="118" x2="838.5" y2="153" stroke="#7a7a7a" stroke-width="1"/>
  <path d="M855.6 122.8 V128.6 L861.5 125.7 Z" fill="#c8d4e8"/>
  <rect x="869.5" y="116.3" width="19" height="17.5" rx="3" fill="#5679b3" stroke="#6c8cc0" stroke-width="1"/>
  <path d="M871.8 118.1 H886.2 L878.9 131.9 Z M876.5 121.2 L881.6 121.2 L879 126.3 Z" fill="#eb9548" fill-rule="evenodd" stroke="#eb9548" stroke-width="0.6" stroke-linejoin="round"/>
  <text x="893.5" y="130" font-family="Liberation Sans" font-size="11" fill="#f2b052">Plane</text>
  <g stroke="#2cc4cc" stroke-width="1">
    <path d="M945 120 H955 L950 130 Z" fill="none"/>
    <rect x="943.5" y="118.5" width="3" height="3" fill="#0d3f4f"/>
    <rect x="953.5" y="118.5" width="3" height="3" fill="#0d3f4f"/>
    <rect x="948.5" y="128.3" width="3" height="3" fill="#0d3f4f"/>
  </g>
  <path d="M1116.5 124.5 C1119 120.5 1121.5 119.8 1123.5 119.8 C1125.5 119.8 1128 120.5 1130.5 124.5 C1128 128.5 1125.5 129.2 1123.5 129.2 C1121.5 129.2 1119 128.5 1116.5 124.5Z" fill="none" stroke="#e8ecf4" stroke-width="1.5"/>
  <circle cx="1123.5" cy="124.5" r="1.8" fill="#e8ecf4"/>
  <!-- row 4 plane.001 -->
  <path d="M855.6 142.8 V148.6 L861.5 145.7 Z" fill="#7a7a7a"/>
  <path d="M871.8 138.1 H886.2 L878.9 151.9 Z M876.5 141.2 L881.6 141.2 L879 146.3 Z" fill="#86603f" fill-rule="evenodd" stroke="#86603f" stroke-width="0.6" stroke-linejoin="round"/>
  <text x="893.5" y="150" font-family="Liberation Sans" font-size="11" fill="#8c8c8c">Plane.001</text>
  <g stroke="#1c8864" stroke-width="1">
    <path d="M969 140 H979 L974 150 Z" fill="none"/>
    <rect x="967.5" y="138.5" width="3" height="3" fill="#0b2a20"/>
    <rect x="977.5" y="138.5" width="3" height="3" fill="#0b2a20"/>
    <rect x="972.5" y="148.3" width="3" height="3" fill="#0b2a20"/>
  </g>
  <path d="M1116.5 145 C1120 149 1127 149 1130.5 145" fill="none" stroke="#c8c8c8" stroke-width="1.1"/>
  <g fill="none" stroke-linecap="round" stroke-linejoin="round" stroke="#22df0a" stroke-width="7">
    <path d="M863.3 199 Q862 225 860.7 248"/>
    <path d="M876.4 193 Q879 220 880.8 247.3"/>
    <path d="M848.4 215.7 L893 210.5 Q895 213 895.7 219.2"/>
    <path d="M846.6 228.9 Q860 222 882.6 219.2 L896.6 218.3"/>
    <path d="M909.7 186 Q904 180 905.4 176.3 Q910 168 917.6 167.5 L938.7 167.5 Q948 171 949.2 181.5 L949.2 202.6 Q942 218 928.1 232.4 Q950 222 968.4 219.2 Q970 212 967.6 206"/>
  </g>
</svg>
</div>
<div id="props" class="a">
<svg width="329" height="266" viewBox="809 362 329 266" style="position:absolute;left:0;top:0">
  <rect x="809" y="362" width="329" height="24.5" fill="#3b3b3b"/>
  <rect x="809" y="386.5" width="28" height="242" fill="#2e2e2e"/>
  <!-- header -->
  <rect x="817.6" y="364.9" width="30.6" height="18.1" rx="3" fill="#2a2a2a"/>
  <rect x="821.5" y="367.3" width="14" height="6" rx="3" fill="#dcdcdc"/>
  <rect x="821.5" y="374.8" width="14" height="6" rx="3" fill="#dcdcdc"/>
  <rect x="828" y="368.8" width="6" height="3" rx="1.5" fill="#2a2a2a"/>
  <rect x="828" y="376.3" width="6" height="3" rx="1.5" fill="#2a2a2a"/>
  <path d="M839 371.5 L842 374.5 L845 371.5" fill="none" stroke="#d0d0d0" stroke-width="1.1"/>
  <rect x="920.8" y="364.9" width="109" height="18.1" rx="3" fill="#1d1d1d"/>
  <circle cx="933" cy="371.3" r="3.8" fill="none" stroke="#d8d8d8" stroke-width="1.2"/>
  <path d="M930.3 374 L925.3 379" stroke="#d8d8d8" stroke-width="1.2"/>
  <rect x="1114" y="364.8" width="18" height="18.3" rx="3" fill="#2a2a2a"/>
  <path d="M1120 372 L1123 375 L1126 372" fill="none" stroke="#e0e0e0" stroke-width="1.2"/>
  <!-- tabs -->
  <g fill="#282828">
    <rect x="811.5" y="395.6" width="25.5" height="26.3"/>
    <rect x="811.5" y="431.4" width="25.5" height="140.6"/>
    <rect x="811.5" y="579.2" width="25.5" height="28.2"/>
  </g>
  <g stroke="#1f1f1f" stroke-width="1">
    <line x1="811.5" y1="459" x2="837" y2="459"/>
    <line x1="811.5" y1="487" x2="837" y2="487"/>
    <line x1="811.5" y1="515" x2="837" y2="515"/>
    <line x1="811.5" y1="543" x2="837" y2="543"/>
  </g>
  <path d="M811.5 628 V611.3 A3 3 0 0 1 814.5 608.3 H837 V628Z" fill="#434343"/>
  <!-- tool icon -->
  <g fill="#d8d8d8">
    <rect x="818.3" y="401.5" width="1.4" height="7"/>
    <circle cx="819" cy="412.3" r="2.9"/>
    <path d="M823.8 401.8 C822.8 404 823.5 407 826.2 407.8 V414.5 C826.2 416 828.8 416 828.8 414.5 V407.8 C831.5 407 832.2 404 831.2 401.8 L830 401.8 V404.8 H825 V401.8 Z"/>
  </g>
  <!-- render icon -->
  <g fill="none" stroke="#d8d8d8" stroke-width="1.3">
    <rect x="817.8" y="440" width="13" height="10"/>
    <path d="M820.5 440 V437.8 H826.5 V440"/>
  </g>
  <rect x="820" y="442.5" width="6.5" height="1.2" fill="#d8d8d8"/><rect x="820" y="445.5" width="6.5" height="1.2" fill="#d8d8d8"/>
  <rect x="827.8" y="442.3" width="1.8" height="1.8" fill="#d8d8d8"/><rect x="827.8" y="445.5" width="1.8" height="1.8" fill="#d8d8d8"/>
  <rect x="828.5" y="436.3" width="2" height="1.2" fill="#d8d8d8"/>
  <!-- output icon -->
  <path d="M817.2 471 V468.3 A1.8 1.8 0 0 1 819 466.5 H829.5 A1.8 1.8 0 0 1 831.2 468.3 V471 Z" fill="#d8d8d8"/>
  <rect x="819.8" y="471" width="9" height="8.5" fill="#d8d8d8"/>
  <rect x="821" y="472.5" width="6.6" height="6" fill="#282828"/>
  <path d="M821.5 478.3 L823.8 474.5 L825.3 476.5 L826.3 475.7 L827.3 478.3Z" fill="#d8d8d8"/>
  <circle cx="826.3" cy="473.8" r="0.7" fill="#d8d8d8"/>
  <!-- view layer -->
  <path d="M817.3 497.5 V507.3 H827 M819.3 495.5 V505.3 H829" fill="none" stroke="#d8d8d8" stroke-width="1"/>
  <rect x="821.5" y="493.8" width="9.5" height="9.5" fill="none" stroke="#d8d8d8" stroke-width="1.1"/>
  <path d="M822 502.8 L825 497.5 L827.5 500.5 L828.5 499.5 L830.5 502.8Z" fill="#d8d8d8"/>
  <circle cx="828.7" cy="496.3" r="0.9" fill="#d8d8d8"/>
  <!-- scene -->
  <path d="M820.8 521.5 C819.5 524 817.5 527 817.5 529.8 C817.5 531.8 819 533.2 820.8 533.2 C821.7 533.2 822.5 532.9 823 532.3 C822.5 529 824 527 825.3 526.7 C824 524.8 821.8 522.8 820.8 521.5Z" fill="#d8d8d8"/>
  <circle cx="829" cy="524.4" r="2" fill="#d8d8d8"/>
  <circle cx="826.4" cy="531.6" r="3.6" fill="none" stroke="#d8d8d8" stroke-width="1.3"/>
  <!-- world -->
  <circle cx="823.8" cy="556.5" r="6" fill="none" stroke="#d7606f" stroke-width="1.3"/>
  <path d="M819.5 553.5 C821 552 823.5 551.5 825.5 552.5 C825 554.5 823 555 822.5 556.5 C824 557.5 825.5 558 825 560 C824 561 822.5 561.5 821.5 560.5 C821.5 558.5 820 557.5 818.5 557 Z M826.5 555.5 C828 555 829.5 556 829.5 558 C828.5 559.5 827.5 559 827 557.5Z" fill="#d7606f"/>
  <path d="M817.2 566 L830.7 550" stroke="#d7606f" stroke-width="1"/>
  <!-- object -->
  <rect x="819.9" y="588.9" width="8.3" height="8.3" fill="#e8944a"/>
  <path d="M817 588 V586 H819.5 M828.8 586 H831.3 V588 M831.3 597.8 V600 H828.8 M819.5 600 H817 V597.8" fill="none" stroke="#c98a58" stroke-width="1.1"/>
  <!-- wrench -->
  <path d="M817.3 625 L824.2 618.2 C823 615.2 825.3 611.8 829 612.5 L826.7 615 L827.5 617.5 L830 618.3 L832.2 615.8 C833 619.5 829.8 622 826.6 620.6 L819.6 627.5 C818.8 628.3 816.5 626.2 817.3 625Z" fill="#72a9ee"/>
  <!-- content -->
  <path d="M848.5 401 V398.5 H851 M859.5 398.5 H862 V401 M862 409.5 V412 H859.5 M851 412 H848.5 V409.5" fill="none" stroke="#c8c8c8" stroke-width="1.1"/>
  <rect x="851.3" y="401.3" width="7.9" height="7.9" fill="#e2e2e2"/>
  <text x="871.7" y="409" font-family="Liberation Sans" font-size="11" fill="#dadada">Plane</text>
  <g transform="translate(1123.5 405) rotate(45)" fill="none" stroke="#8c8c8c" stroke-width="1.1" stroke-linejoin="round">
    <path d="M-2.5 -7 H2.5 M-1.8 -7 V-2.5 L-4 0 H4 L1.8 -2.5 V-7 M0 0 V7.5"/>
  </g>
  <rect x="846" y="432" width="287" height="17.8" rx="3" fill="#2b2b2b"/>
  <text x="853.5" y="445" font-family="Liberation Sans" font-size="11" fill="#dadada">Add Modifier</text>
  <path d="M1123 440 L1126 443 L1129 440" fill="none" stroke="#e0e0e0" stroke-width="1.2"/>
</svg>
</div>
</body></html>
